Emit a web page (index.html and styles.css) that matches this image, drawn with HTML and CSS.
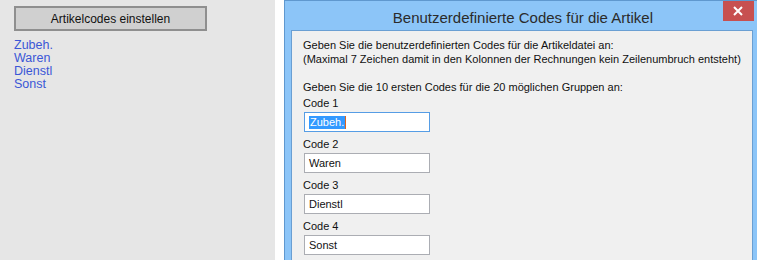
FILE: index.html
```html
<!DOCTYPE html>
<html lang="de">
<head>
  <meta charset="UTF-8" />
  <title>Artikelcodes</title>
  <link rel="stylesheet" href="styles.css">
</head>
<body>
  <div class="side">
    <button class="side-button">Artikelcodes einstellen</button>
    <ul class="code-list">
      <li>Zubeh.</li>
      <li>Waren</li>
      <li>Dienstl</li>
      <li>Sonst</li>
    </ul>
  </div>

  <div class="dialog">
    <div class="titlebar">
      <span class="title">Benutzerdefinierte Codes für die Artikel</span>
      <button class="close">
        <svg width="10" height="10" viewBox="0 0 10 10">
          <path d="M1 1 L9 9 M9 1 L1 9" stroke="#fff" stroke-width="2"/>
        </svg>
      </button>
    </div>
    <div class="content">
      <p class="intro">Geben Sie die benutzerdefinierten Codes für die Artikeldatei an:<br>(Maximal 7 Zeichen damit in den Kolonnen der Rechnungen kein Zeilenumbruch entsteht)</p>
      <p class="hint">Geben Sie die 10 ersten Codes für die 20 möglichen Gruppen an:</p>
      <div class="field">
        <label>Code 1</label>
        <div class="input focused"><span class="selected">Zubeh.</span><span class="caret"></span></div>
      </div>
      <div class="field">
        <label>Code 2</label>
        <div class="input">Waren</div>
      </div>
      <div class="field">
        <label>Code 3</label>
        <div class="input">Dienstl</div>
      </div>
      <div class="field">
        <label>Code 4</label>
        <div class="input">Sonst</div>
      </div>
    </div>
  </div>
</body>
</html>
```

FILE: styles.css
```css
body {
  margin: 0;
  height: 260px;
  overflow: hidden;
  display: flex;
  gap: 9px;
  background: #fff;
  font-family: "Liberation Sans", Arial, sans-serif;
}

.side {
  width: 275px;
  flex-shrink: 0;
  background: #e6e6e6;
  padding: 6px 0 0 14px;
  box-sizing: border-box;
}

.side-button {
  display: block;
  width: 193px;
  height: 25px;
  background: #d0d0d0;
  border: 2px solid #8f8f8f;
  font-family: inherit;
  font-size: 12px;
  color: #111;
  padding: 0;
}

.code-list {
  list-style: none;
  margin: 8px 0 0;
  padding: 0;
  font-size: 12.5px;
  line-height: 13px;
  color: #3b57d6;
}

.dialog {
  flex: 1;
  position: relative;
  display: flex;
  flex-direction: column;
  background: #8cc5f8;
  border: 1px solid #5f98cf;
  border-bottom: none;
  padding: 0 8px 0 6px;
}

.titlebar {
  flex-shrink: 0;
  height: 29px;
  display: flex;
  align-items: center;
  justify-content: center;
}

.title {
  font-size: 15px;
  color: #2b2b2b;
  padding: 3px 0 0 2px;
}

.close {
  position: absolute;
  top: 0;
  right: 7px;
  width: 31px;
  height: 20px;
  border: none;
  padding: 0;
  background: #c75050;
  display: flex;
  align-items: center;
  justify-content: center;
}

.content {
  flex: 1;
  background: #f0f0f0;
  border: 1px solid #6a9fd3;
  border-bottom: none;
  padding: 7px 11px 0;
  font-size: 11px;
  color: #111;
  white-space: nowrap;
}

.intro {
  margin: 0;
  line-height: 14px;
}

.hint {
  margin: 15px 0 0;
  line-height: 13px;
}

.field label {
  display: block;
  margin-top: 3px;
  line-height: 13px;
}

.field + .field label {
  margin-top: 6px;
}

.input {
  margin: 2px 0 0 1px;
  width: 126px;
  height: 20px;
  box-sizing: border-box;
  border: 1px solid #abadb3;
  background: #fff;
  padding: 0 4px;
  display: flex;
  align-items: center;
}

.input.focused {
  border-color: #569de5;
}

.selected {
  background: #3399ff;
  color: #fff;
  line-height: 13px;
  padding: 0 1px;
}

.caret {
  display: inline-block;
  width: 1px;
  height: 13px;
  background: #e0621b;
}
```
